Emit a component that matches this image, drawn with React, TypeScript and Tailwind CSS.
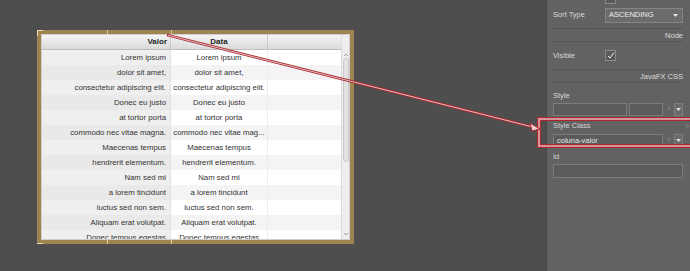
import React from 'react';

const rows = [
  ['Lorem ipsum', 'Lorem ipsum'],
  ['dolor sit amet,', 'dolor sit amet,'],
  ['consectetur adipiscing elit.', 'consectetur adipiscing elit.'],
  ['Donec eu justo', 'Donec eu justo'],
  ['at tortor porta', 'at tortor porta'],
  ['commodo nec vitae magna.', 'commodo nec vitae mag...'],
  ['Maecenas tempus', 'Maecenas tempus'],
  ['hendrerit elementum.', 'hendrerit elementum.'],
  ['Nam sed mi', 'Nam sed mi'],
  ['a lorem tincidunt', 'a lorem tincidunt'],
  ['luctus sed non sem.', 'luctus sed non sem.'],
  ['Aliquam erat volutpat.', 'Aliquam erat volutpat.'],
  ['Donec tempus egestas', 'Donec tempus egestas'],
];

function Table() {
  return (
    <div className="relative w-[317px] h-[214px] border-[4px] border-[#9f844f] shadow-[inset_0_0_0_1px_#d9c89a]">
      {/* column handles */}
      <div className="absolute -left-[4px] -top-[4px] w-[6px] h-px bg-[#e8dcc0]" />
      <div className="absolute -left-[4px] -top-[4px] w-px h-[6px] bg-[#e8dcc0]" />
      <div className="absolute left-[66px] -top-[4px] w-px h-[5px] bg-[#d8cba8]" />
      <div className="absolute left-[130px] -top-[4px] w-px h-[5px] bg-[#d8cba8]" />
      <div className="absolute left-[66px] -bottom-[4px] w-px h-[5px] bg-[#d8cba8]" />
      <div className="absolute left-[130px] -bottom-[4px] w-px h-[5px] bg-[#d8cba8]" />
      <div className="absolute -left-[4px] -bottom-[4px] w-[6px] h-px bg-[#e8dcc0]" />

      <div className="flex h-full overflow-hidden bg-white border border-[#cfcfcf]" style={{ fontFamily: '"Liberation Sans", Arial, sans-serif' }}>
        <div className="flex-1 flex flex-col">
          {/* header */}
          <div className="flex h-[15px] shrink-0 bg-gradient-to-b from-[#f5f5f5] to-[#dadada] border-b border-[#bdbdbd] text-[8px] font-bold text-[#1e1e1e] leading-[14px]">
            <div className="w-[129px] text-right pr-[3px] border-r border-[#c9c9c9]">Valor</div>
            <div className="w-[97px] text-center border-r border-[#c9c9c9]">Data</div>
            <div className="flex-1" />
          </div>
          {rows.map(([a, b], i) => (
            <div key={i} className={`flex h-[15px] shrink-0 text-[7.8px] text-[#333333] leading-[15px] ${i % 2 ? 'bg-[#f4f4f4]' : 'bg-white'}`}>
              <div className={`w-[129px] text-right pr-[4px] whitespace-nowrap border-r border-[#e2e2e2] ${i % 2 ? 'bg-[#e9e9e9]' : 'bg-[#efefef]'}`}>{a}</div>
              <div className="w-[97px] text-center whitespace-nowrap overflow-hidden border-r border-[#ececec]">{b}</div>
              <div className="flex-1" />
            </div>
          ))}
        </div>
        {/* scrollbar */}
        <div className="w-[8px] flex flex-col items-center bg-[#eeeeee] border-l border-[#dcdcdc] pt-[15px]">
          <svg width="6" height="5" viewBox="0 0 6 5" className="mt-[2px]"><path d="M1 4 L3 2 L5 4" stroke="#888" strokeWidth="0.8" fill="none" /></svg>
          <div className="w-[6px] h-[104px] mt-[1px] rounded-[3px] bg-[#e2e2e2] border border-[#cacaca]" />
          <div className="flex-1" />
          <svg width="6" height="5" viewBox="0 0 6 5" className="mb-[2px]"><path d="M1 1 L3 3 L5 1" stroke="#888" strokeWidth="0.8" fill="none" /></svg>
        </div>
      </div>
    </div>
  );
}

function Field({ className = '', children }: { className?: string; children?: React.ReactNode }) {
  return (
    <div className={`h-[13px] bg-[#5b5b5b] border border-[#7c7c7c] text-[7.5px] leading-[11px] text-[#e4e4e4] px-[3px] ${className}`}>{children}</div>
  );
}

function Caret() {
  return (
    <div className="w-[9px] h-[13px] bg-[#6a6a6a] border border-[#7c7c7c] flex items-center justify-center">
      <svg width="5" height="3" viewBox="0 0 5 3"><path d="M0 0 H5 L2.5 3 Z" fill="#e0e0e0" /></svg>
    </div>
  );
}

function SectionHeader({ title }: { title: string }) {
  return (
    <div className="h-[14px] border-t border-b border-[#555555] text-right text-[7.5px] leading-[13px] text-[#dcdcdc]">{title}</div>
  );
}

function Panel() {
  return (
    <div className="w-[144px] h-full bg-[#626262] border-l border-[#474747] overflow-hidden text-[#d8d8d8]" style={{ fontFamily: '"Liberation Sans", Arial, sans-serif' }}>
      <div className="px-[6px] pr-[7px] -mt-[9px]">
        <div className="flex items-center h-[14px] text-[7.5px]">
          <span className="w-[52px]">Sortable</span>
          <div className="w-[11px] h-[11px] border border-[#8a8a8a] bg-[#5a5a5a]" />
        </div>
        <div className="flex items-center h-[20px] text-[7.5px]">
          <span className="w-[52px]">Sort Type</span>
          <div className="flex-1 h-[15px] bg-[#6c6c6c] border border-[#858585] flex items-center justify-between pl-[3px] pr-[4px] text-[#ececec]">
            <span>ASCENDING</span>
            <svg width="5" height="3" viewBox="0 0 5 3"><path d="M0 0 H5 L2.5 3 Z" fill="#e8e8e8" /></svg>
          </div>
        </div>
        <div className="h-[3px]" />
        <SectionHeader title="Node" />
        <div className="flex items-center h-[27px] text-[7.5px]">
          <span className="w-[52px]">Visible</span>
          <div className="w-[11px] h-[11px] border border-[#8a8a8a] bg-[#5a5a5a] flex items-center justify-center">
            <svg width="8" height="7" viewBox="0 0 8 7"><path d="M1 4 L3 6 L7 0.5" stroke="#f2f2f2" strokeWidth="1" fill="none" /></svg>
          </div>
        </div>
        <SectionHeader title="JavaFX CSS" />
        <div className="text-[7.5px] leading-[10px] mt-[8px]">Style</div>
        <div className="flex items-center gap-[2px] mt-[2px]">
          <Field className="w-[76px]" />
          <Field className="w-[35px]" />
          <span className="w-[7px] text-center text-[7px] text-[#8c8c8c]">+</span>
          <Caret />
        </div>
        <div className="relative text-[7.5px] leading-[10px] mt-[5px]">
          Style Class
          <span className="absolute -right-[6px] top-0 text-[6px] text-[#c8c8c8]">○</span>
        </div>
        <div className="flex items-center gap-[2px] mt-[3px]">
          <Field className="w-[113px]">coluna-valor</Field>
          <span className="w-[7px] text-center text-[7px] text-[#8c8c8c]">+</span>
          <Caret />
        </div>
        <div className="text-[7.5px] leading-[10px] mt-[5px]">Id</div>
        <Field className="mt-[2px] h-[14px]" />
      </div>
    </div>
  );
}

export default function App() {
  return (
    <div className="relative w-[690px] h-[271px] flex bg-[#4e4e4e] overflow-hidden">
      <div className="flex-1 pl-[37px] pt-[30px]">
        <Table />
      </div>
      <Panel />

      {/* highlight box */}
      <div className="absolute left-[537px] top-[117px] w-[160px] h-[31px] border border-[#a8282e] shadow-[inset_0_0_0_2px_#d99496,inset_0_0_0_3px_#a8282e]" />

      {/* connector arrow */}
      <svg className="absolute left-0 top-0 pointer-events-none" width="690" height="271" viewBox="0 0 690 271">
        <line x1="167" y1="35" x2="533" y2="127" stroke="#a8282e" strokeWidth="2.8" />
        <line x1="168" y1="35.3" x2="532" y2="126.8" stroke="#ecd0d0" strokeWidth="0.9" />
        <polygon points="540,129 530,123 532,131" fill="#ecd0d0" stroke="#a8282e" strokeWidth="1" />
      </svg>
    </div>
  );
}
